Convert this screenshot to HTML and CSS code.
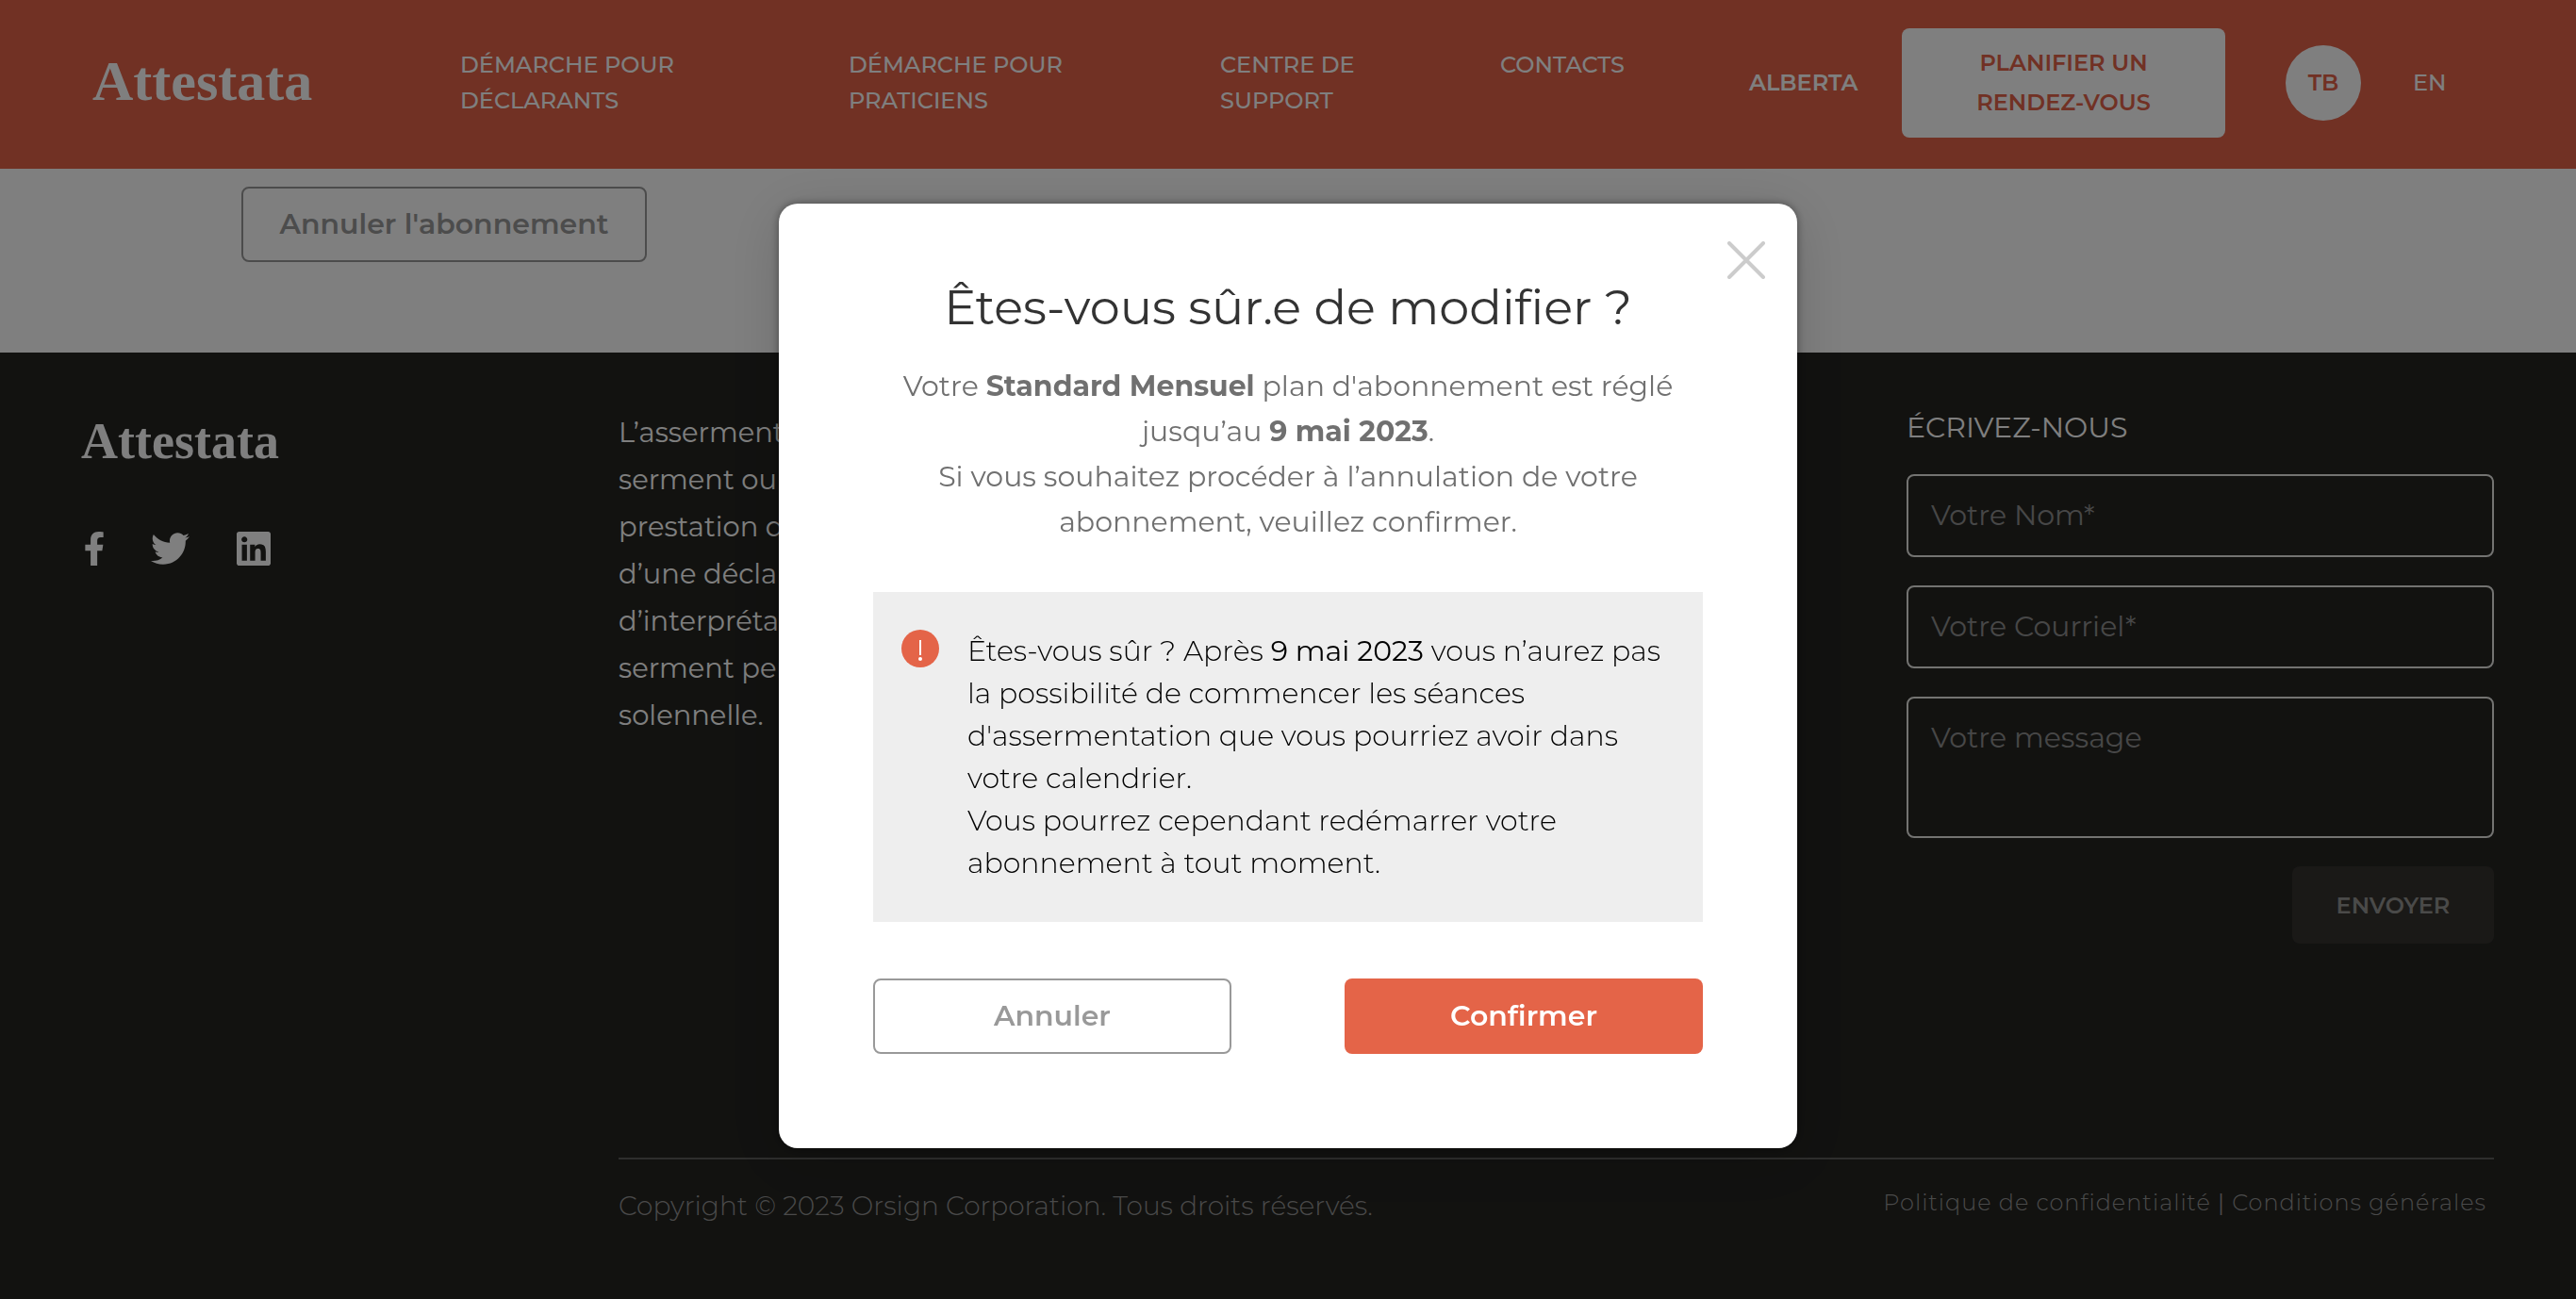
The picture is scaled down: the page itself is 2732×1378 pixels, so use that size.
FILE: index.html
```html
<!DOCTYPE html>
<html lang="fr">
<head>
<meta charset="utf-8">
<title>Attestata</title>
<link rel="stylesheet" href="styles.css">
</head>
<body>
<header class="header">
  <a class="logo" href="#">Attestata</a>
  <a class="nav-link" href="#">DÉMARCHE POUR<br>DÉCLARANTS</a>
  <a class="nav-link" href="#">DÉMARCHE POUR<br>PRATICIENS</a>
  <a class="nav-link" href="#">CENTRE DE<br>SUPPORT</a>
  <a class="nav-link" href="#">CONTACTS</a>
  <div class="tools">
    <a class="region" href="#">ALBERTA</a>
    <button class="book" type="button">PLANIFIER UN<br>RENDEZ-VOUS</button>
    <button class="avatar" type="button">TB</button>
    <a class="lang" href="#">EN</a>
  </div>
</header>

<main class="main">
  <button class="btn btn-outline btn-cancel-plan" type="button">Annuler l'abonnement</button>
</main>

<footer class="footer">
  <div class="brand">
    <a class="logo logo-small" href="#">Attestata</a>
    <div class="social">
      <a href="#" aria-label="Facebook"><svg class="icon-fb" viewBox="22 0 276 512"><path d="M279.14 288l14.22-92.66h-88.91v-60.13c0-25.35 12.42-50.06 52.24-50.06h40.42V6.26S260.43 0 225.36 0c-73.22 0-121.08 44.38-121.08 124.72v70.62H22.89V288h81.39v224h100.17V288z"/></svg></a>
      <a href="#" aria-label="Twitter"><svg class="icon-tw" viewBox="0 48 512 416"><path d="M459.37 151.716c.325 4.548.325 9.097.325 13.645 0 138.72-105.583 298.558-298.558 298.558-59.452 0-114.68-17.219-161.137-47.106 8.447.974 16.568 1.299 25.34 1.299 49.055 0 94.213-16.568 130.274-44.832-46.132-.975-84.792-31.188-98.112-72.772 6.498.974 12.995 1.624 19.818 1.624 9.421 0 18.843-1.3 27.614-3.573-48.081-9.747-84.143-51.98-84.143-102.985v-1.299c13.969 7.797 30.214 12.67 47.431 13.319-28.264-18.843-46.781-51.005-46.781-87.391 0-19.492 5.197-37.36 14.294-52.954 51.655 63.675 129.3 105.258 216.365 109.807-1.624-7.797-2.599-15.918-2.599-24.04 0-57.828 46.782-104.934 104.934-104.934 30.213 0 57.502 12.67 76.67 33.137 23.715-4.548 46.456-13.32 66.599-25.34-7.798 24.366-24.366 44.833-46.132 57.827 21.117-2.273 41.584-8.122 60.426-16.243-14.292 20.791-32.161 39.308-52.628 54.253z"/></svg></a>
      <a href="#" aria-label="LinkedIn"><svg class="icon-in" viewBox="0 32 448 448"><path d="M416 32H31.9C14.3 32 0 46.5 0 64.3v383.4C0 465.5 14.3 480 31.9 480H416c17.6 0 32-14.5 32-32.3V64.3c0-17.8-14.4-32.3-32-32.3zM135.4 416H69V202.2h66.5V416zm-33.2-243c-21.3 0-38.5-17.3-38.5-38.5S80.9 96 102.2 96c21.2 0 38.5 17.3 38.5 38.5 0 21.3-17.2 38.5-38.5 38.5zm282.1 243h-66.4V312c0-24.8-.5-56.7-34.5-56.7-34.6 0-39.9 27-39.9 54.9V416h-66.4V202.2h63.7v29.2h.9c8.9-16.8 30.6-34.5 62.9-34.5 67.2 0 79.7 44.3 79.7 101.9V416z"/></svg></a>
    </div>
  </div>
  <p class="about">L’assermentation<br>serment ou<br>prestation d’un<br>d’une déclaration<br>d’interprétation<br>serment per<br>solennelle.</p>
  <form class="contact">
    <h2 class="contact-title">ÉCRIVEZ-NOUS</h2>
    <input class="field" type="text" placeholder="Votre Nom*" aria-label="Votre Nom">
    <input class="field" type="email" placeholder="Votre Courriel*" aria-label="Votre Courriel">
    <textarea class="field field-area" placeholder="Votre message" aria-label="Votre message"></textarea>
    <button class="send" type="button">ENVOYER</button>
  </form>
  <div class="legal">
    <span class="copyright">Copyright © 2023 Orsign Corporation. Tous droits réservés.</span>
    <span class="links"><a href="#">Politique de confidentialité</a> <b>|</b> <a href="#">Conditions générales</a></span>
  </div>
</footer>

<div class="overlay">
  <section class="modal" role="dialog" aria-modal="true" aria-labelledby="modal-title">
    <button class="close" type="button" aria-label="Fermer"><svg viewBox="0 0 40 40"><path d="M2 2L38 38M38 2L2 38"/></svg></button>
    <h1 class="modal-title" id="modal-title">Êtes-vous sûr.e de modifier ?</h1>
    <p class="modal-text">Votre <strong>Standard Mensuel</strong> plan d'abonnement est réglé<br>jusqu’au <strong>9 mai 2023</strong>.<br>Si vous souhaitez procéder à l’annulation de votre<br>abonnement, veuillez confirmer.</p>
    <div class="alert">
      <svg class="alert-icon" viewBox="0 0 40 40" aria-hidden="true"><circle cx="20" cy="20" r="20"/><path d="M19 11h2v16h-2z"/><circle class="dot" cx="20" cy="31" r="2"/></svg>
      <p class="alert-text">Êtes-vous sûr ? Après <b>9 mai 2023</b> vous n’aurez pas<br>la possibilité de commencer les séances<br>d'assermentation que vous pourriez avoir dans<br>votre calendrier.<br>Vous pourrez cependant redémarrer votre<br>abonnement à tout moment.</p>
    </div>
    <div class="actions">
      <button class="btn btn-outline" type="button">Annuler</button>
      <button class="btn btn-primary" type="button">Confirmer</button>
    </div>
  </section>
</div>
</body>
</html>
```
FILE: styles.css
```css
* { box-sizing: border-box; margin: 0; padding: 0; }
body {
  display: flex; flex-direction: column; min-height: 100vh;
  font-family: Montserrat, Inter, "Open Sans", sans-serif;
  font-size: 30px; color: #333; background: #fff;
}
a { color: inherit; text-decoration: none; }
button, input, textarea { font: inherit; color: inherit; border: 0; background: none; }
button { cursor: pointer; }
svg { display: block; }

.header {
  display: grid; grid-template-columns: 390fr 412fr 394fr 297fr 264fr auto;
  align-items: center; padding: 30px 139px 33px 98px;
  background: #e26249; color: #fff;
  font-size: 24px; font-weight: 500; line-height: 38px;
}
.logo { font-family: "Liberation Serif", serif; font-weight: 700; font-size: 60px; line-height: 56px; padding-bottom: 4px; }
.nav-link { min-height: 76px; }
.tools { display: flex; align-items: center; }
.region { width: 162px; font-weight: 600; }
.book {
  width: 343px; padding: 16px; margin-right: 64px; border-radius: 8px;
  background: #fff; color: #e26249; font-weight: 600; line-height: 42px;
}
.avatar { width: 80px; height: 80px; margin-right: 55px; border-radius: 50%; background: #fff; color: #e26249; font-weight: 600; }
.lang { width: 34px; }

.main { padding: 19px 256px 96px; }
.btn { height: 80px; padding-bottom: 2px; border-radius: 8px; font-weight: 600; }
.btn-outline { border: 2px solid #999; color: #999; }
.btn-primary { background: #e46448; color: #fff; }
.btn-cancel-plan { width: 430px; }

.footer {
  flex: 1; display: grid; grid-template-columns: 570px 1366fr 623fr; align-content: start;
  padding: 60px 87px 60px 86px; background: #242421; color: #fff;
}
.logo-small { display: block; font-size: 54px; line-height: 60px; padding-bottom: 0; }
.brand { padding-top: 4px; }
.social { display: flex; align-items: center; gap: 50px; margin-top: 66px; padding-left: 4px; fill: #fff; }
.icon-fb { width: 20px; height: 36px; }
.icon-tw { width: 41px; height: 34px; }
.icon-in { width: 36px; height: 36px; }
.about { font-size: 29px; line-height: 50px; }
.contact { display: grid; gap: 30px; }
.contact-title { font-size: 30px; font-weight: 400; line-height: 39px; }
.field {
  width: 100%; height: 88px; padding: 0 24px 2px; border: 2px solid #e6e6e2; border-radius: 8px;
  font-weight: 400; line-height: 40px; outline: 0;
}
.field::placeholder { color: #8e8e8e; opacity: 1; }
.field-area { display: block; height: 150px; padding-top: 22px; resize: none; }
.send {
  justify-self: end; width: 214px; height: 82px; border-radius: 8px;
  background: #34322f; color: #959592; font-size: 24px; font-weight: 600;
}
.legal {
  grid-column: 2 / 4; display: flex; justify-content: space-between; align-items: flex-start;
  margin-top: 227px; padding: 29px 8px 0 0; border-top: 2px solid #5c5c5a;
  font-size: 28px; font-weight: 300; line-height: 40px; color: #959595;
}
.links { font-size: 24px; line-height: 34px; letter-spacing: 1px; }

.overlay {
  position: fixed; inset: 0; display: grid; place-items: center;
  padding-top: 56px; background: rgba(0, 0, 0, .5);
}
.modal {
  position: relative; width: 1080px; padding: 80px 100px 100px; border-radius: 20px; background: #fff;
  box-shadow: 0 0 10px rgba(0, 0, 0, .4), 0 10px 60px rgba(0, 0, 0, .15);
}
.close { position: absolute; top: 40px; right: 34px; width: 40px; height: 40px; }
.close svg { stroke: #ccc; stroke-width: 4; stroke-linecap: round; }
.modal-title { font-size: 51px; font-weight: 400; line-height: 60px; text-align: center; }
.modal-text { margin: 30px -20px 50px; line-height: 48px; font-weight: 400; text-align: center; color: #707070; }
.modal-text strong { font-weight: 700; }
.alert { display: flex; gap: 30px; padding: 40px 30px; background: #eee; color: #000; }
.alert-icon { flex: none; width: 40px; height: 40px; fill: #e46448; }
.alert-icon path, .alert-icon .dot { fill: #fff; }
.alert-text { line-height: 45px; font-weight: 300; white-space: nowrap; }
.alert-text b { font-weight: 400; }
.actions { display: grid; grid-template-columns: 1fr 1fr; gap: 120px; margin-top: 60px; }
```
